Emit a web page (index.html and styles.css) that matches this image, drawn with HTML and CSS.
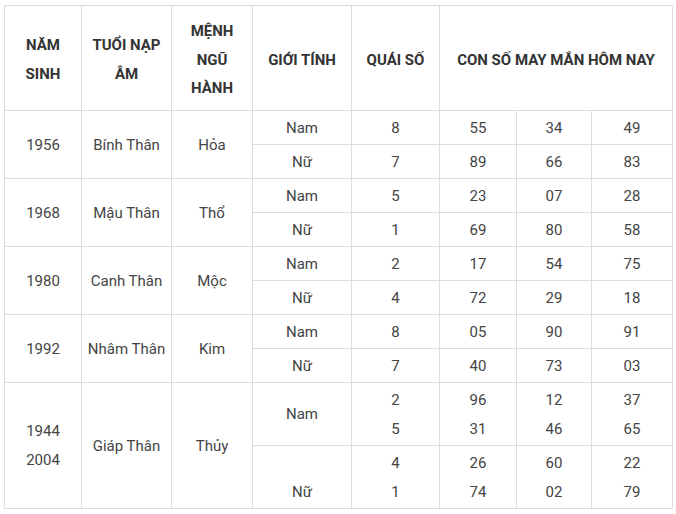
FILE: index.html
```html
<!DOCTYPE html>
<html lang="vi">
<head>
<meta charset="utf-8">
<link rel="stylesheet" href="styles.css">
</head>
<body>
<div class="wrap">
<table class="lucky">
<colgroup>
<col class="c1"><col class="c2"><col class="c3"><col class="c4"><col class="c5"><col class="c6"><col class="c7"><col class="c8">
</colgroup>
<thead>
<tr>
<th>NĂM SINH</th>
<th>TUỔI NẠP ÂM</th>
<th>MỆNH NGŨ HÀNH</th>
<th>GIỚI TÍNH</th>
<th>QUÁI SỐ</th>
<th colspan="3">CON SỐ MAY MẮN HÔM NAY</th>
</tr>
</thead>
<tbody>
<tr><td rowspan="2">1956</td><td rowspan="2">Bính Thân</td><td rowspan="2">Hỏa</td><td>Nam</td><td>8</td><td>55</td><td>34</td><td>49</td></tr>
<tr><td>Nữ</td><td>7</td><td>89</td><td>66</td><td>83</td></tr>
<tr><td rowspan="2">1968</td><td rowspan="2">Mậu Thân</td><td rowspan="2">Thổ</td><td>Nam</td><td>5</td><td>23</td><td>07</td><td>28</td></tr>
<tr><td>Nữ</td><td>1</td><td>69</td><td>80</td><td>58</td></tr>
<tr><td rowspan="2">1980</td><td rowspan="2">Canh Thân</td><td rowspan="2">Mộc</td><td>Nam</td><td>2</td><td>17</td><td>54</td><td>75</td></tr>
<tr><td>Nữ</td><td>4</td><td>72</td><td>29</td><td>18</td></tr>
<tr><td rowspan="2">1992</td><td rowspan="2">Nhâm Thân</td><td rowspan="2">Kim</td><td>Nam</td><td>8</td><td>05</td><td>90</td><td>91</td></tr>
<tr><td>Nữ</td><td>7</td><td>40</td><td>73</td><td>03</td></tr>
<tr><td rowspan="2">1944<br>2004</td><td rowspan="2">Giáp Thân</td><td rowspan="2">Thủy</td><td>Nam</td><td>2<br>5</td><td>96<br>31</td><td>12<br>46</td><td>37<br>65</td></tr>
<tr><td>&nbsp;<br>Nữ</td><td>4<br>1</td><td>26<br>74</td><td>60<br>02</td><td>22<br>79</td></tr>
</tbody>
</table>
</div>
</body>
</html>
```
FILE: styles.css
```css
html, body {
  margin: 0;
  padding: 0;
  background: #fff;
}
.wrap {
  padding: 5px 0 0 4px;
}
.lucky {
  border-collapse: collapse;
  table-layout: fixed;
  width: 668px;
  font-family: Roboto, "Liberation Sans", sans-serif;
  font-size: 15px;
  color: #444;
}
.c1 { width: 77px; }
.c2 { width: 90px; }
.c3 { width: 81px; }
.c4 { width: 99px; }
.c5 { width: 88px; }
.c6 { width: 77px; }
.c7 { width: 75px; }
.c8 { width: 81px; }
.lucky th,
.lucky td {
  border: 1px solid #ddd;
  text-align: center;
  vertical-align: middle;
  line-height: 29px;
  padding: 3px 4px 1px;
}
.lucky th {
  font-weight: 700;
  color: #333;
  padding: 11px 8px 7px;
  line-height: 28.5px;
}
```
